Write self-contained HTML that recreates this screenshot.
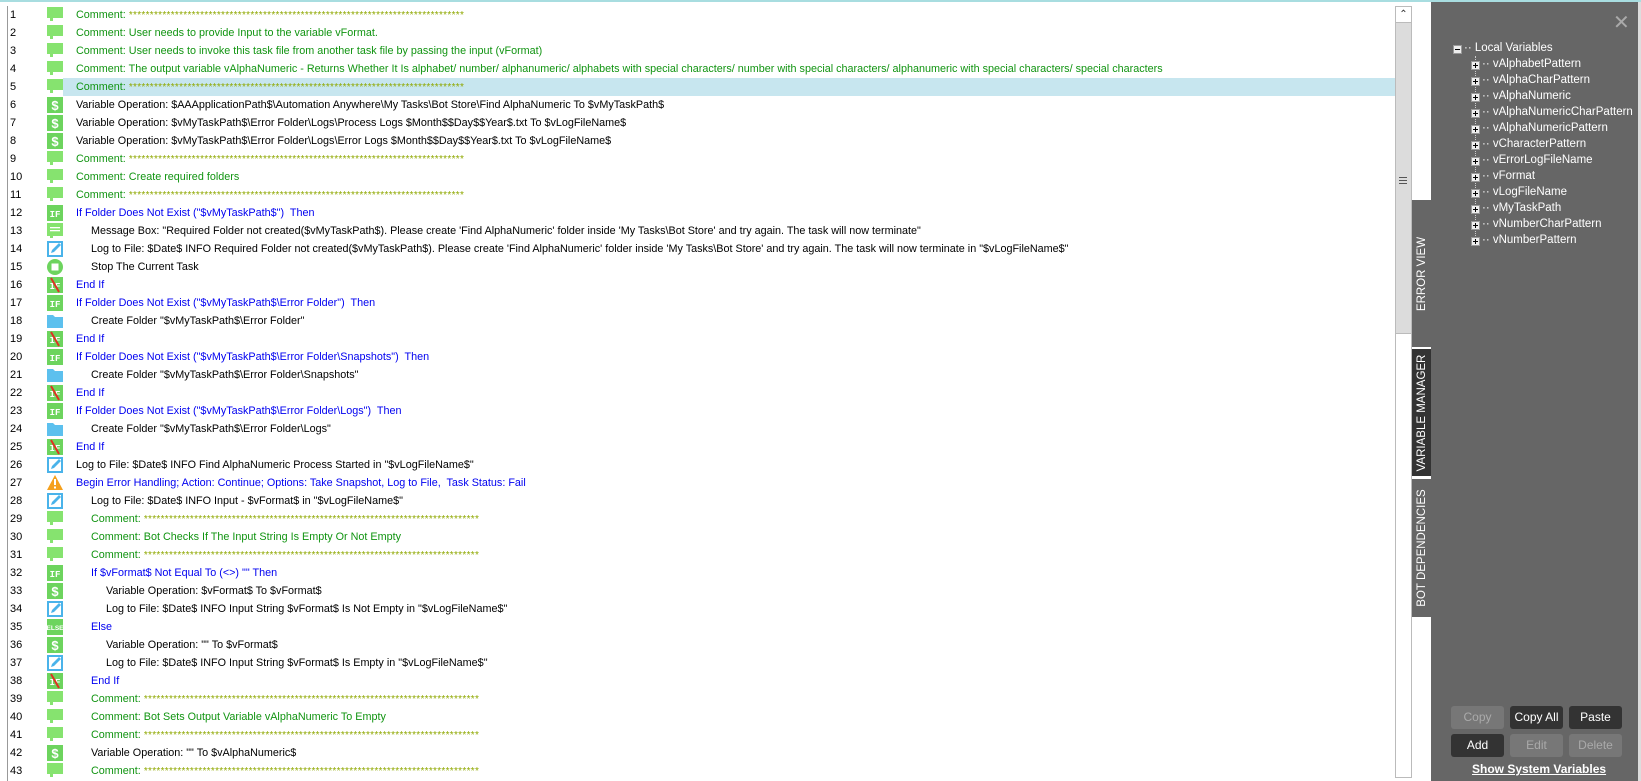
<!DOCTYPE html>
<html><head><meta charset="utf-8"><style>
*{margin:0;padding:0;box-sizing:border-box}
body{width:1641px;height:781px;overflow:hidden;background:#fff;font-family:"Liberation Sans",Arial,sans-serif;font-size:10.8px;position:relative}
.top{position:absolute;left:0;top:0;width:1641px;height:2px;background:#a8dde0}
.lb{position:absolute;left:7px;top:6px;width:1px;height:775px;background:#999}
.r{position:absolute;left:8px;height:18px;width:1387px;line-height:18px;white-space:nowrap}
.r.sel{background:#c7e6ef}
.n{position:absolute;left:2px;top:0;color:#000;font-size:11px}
.ic{position:absolute;left:39px;top:1px;width:16px;height:16px}
.t{position:absolute;left:68px;top:0}
.i1{left:83px}.i2{left:98px}
.g{color:#119411}.b{color:#0000f0}.k{color:#000}
.st{color:#8fa800;letter-spacing:0.3px;font-size:10px}
.sb{position:absolute;left:1395px;top:6px;width:17px;height:772px;border:1px solid #bbb;background:#fff}
.sb .up{position:absolute;left:0;top:0;width:15px;height:16px;border-bottom:1px solid #bbb;text-align:center;font-size:10px;line-height:16px;color:#333}
.sb .th{position:absolute;left:0;top:16px;width:15px;height:311px;background:#dcdcdc;border-bottom:1px solid #bbb}
.sb .th span{position:absolute;left:3px;top:154px;width:8px;height:7px;border-top:1px solid #555;border-bottom:1px solid #555}
.sb .th span:after{content:"";position:absolute;left:0;top:2px;width:8px;height:1px;background:#555}
.panel{position:absolute;left:1431px;top:2px;width:210px;height:779px;background:#666;border-right:3px solid #ddd}
.tab{position:absolute;left:1412px;width:19px;background:#666;color:#fff}
.tab span{position:absolute;left:50%;top:50%;transform:translate(-50%,-50%) rotate(-90deg);white-space:nowrap;font-size:11.5px}
.tv{position:absolute;color:#fff;font-size:11.5px;white-space:nowrap}
.bx{position:absolute;width:9px;height:9px;background:#eee;border:1px solid #999}
.bx:before{content:"";position:absolute;left:1px;top:3px;width:5px;height:1px;background:#000}
.bx.p:after{content:"";position:absolute;left:3px;top:1px;width:1px;height:5px;background:#000}
.btn{position:absolute;width:53px;height:23px;border-radius:3px;text-align:center;line-height:23px;font-size:12px}
.on{background:#333;color:#fff}.off{background:#777;color:#aaa}
</style></head><body>
<div class="top"></div>
<div class="lb"></div>

<svg width="0" height="0" style="position:absolute">
<defs>
<g id="cm"><rect x="0" y="0" width="16" height="11" fill="#86e36f"/><rect x="3" y="11" width="3" height="3" fill="#86e36f"/></g>
<g id="dl"><rect width="16" height="16" fill="#6dd45e"/><text x="8" y="13" text-anchor="middle" fill="#fff" font-size="13" font-family="Liberation Sans" font-weight="bold">$</text></g>
<g id="if"><rect width="16" height="16" fill="#6dd45e"/><text x="8" y="12" text-anchor="middle" fill="#fff" font-size="9" font-family="Liberation Mono" font-weight="bold">IF</text></g>
<g id="ei"><rect width="16" height="16" fill="#6dd45e"/><text x="8" y="12" text-anchor="middle" fill="#fff" font-size="9" font-family="Liberation Mono" font-weight="bold">IF</text><line x1="4" y1="1" x2="12" y2="15" stroke="#d32" stroke-width="2"/></g>
<g id="mb"><rect width="16" height="13" fill="#86e36f"/><rect x="3" y="4" width="10" height="1.3" fill="#fff"/><rect x="3" y="7" width="10" height="1.3" fill="#fff"/><rect x="3" y="13" width="3" height="2" fill="#86e36f"/></g>
<g id="lg"><rect x="1" y="1" width="14" height="14" fill="#fff" stroke="#4ab3ea" stroke-width="2"/><path d="M4 12 L5 9 L12 2 L14 4 L7 11 Z" fill="#4ab3ea"/></g>
<g id="sp"><circle cx="8" cy="8" r="8" fill="#6dd45e"/><rect x="4.5" y="4.5" width="7" height="7" fill="#fff"/></g>
<g id="fd"><path d="M0 2 H6 L8 4 H16 V15 H0 Z" fill="#5cc0ee"/></g>
<g id="wr"><path d="M8 0 L16 15 H0 Z" fill="#f5a01c"/><rect x="7" y="4" width="2" height="6" fill="#fff"/><rect x="7" y="11.5" width="2" height="2" fill="#fff"/></g>
<g id="el"><rect width="16" height="16" fill="#6dd45e"/><text x="8" y="11" text-anchor="middle" fill="#fff" font-size="6.5" font-family="Liberation Sans" font-weight="bold">ELSE</text></g>
</defs></svg>

<div class="r" style="top:6px"><span class="n">1</span><svg class="ic"><use href="#cm"/></svg><span class="t g">Comment: <span class="st">********************************************************************************</span></span></div>
<div class="r" style="top:24px"><span class="n">2</span><svg class="ic"><use href="#cm"/></svg><span class="t g">Comment: User needs to provide Input to the variable vFormat.</span></div>
<div class="r" style="top:42px"><span class="n">3</span><svg class="ic"><use href="#cm"/></svg><span class="t g">Comment: User needs to invoke this task file from another task file by passing the input (vFormat)</span></div>
<div class="r" style="top:60px"><span class="n">4</span><svg class="ic"><use href="#cm"/></svg><span class="t g">Comment: The output variable vAlphaNumeric - Returns Whether It Is alphabet/ number/ alphanumeric/ alphabets with special characters/ number with special characters/ alphanumeric with special characters/ special characters</span></div>
<div class="r sel" style="top:78px;left:63px;width:1332px"></div>
<div class="r" style="top:78px"><span class="n">5</span><svg class="ic"><use href="#cm"/></svg><span class="t g">Comment: <span class="st">********************************************************************************</span></span></div>
<div class="r" style="top:96px"><span class="n">6</span><svg class="ic"><use href="#dl"/></svg><span class="t k">Variable Operation: $AAApplicationPath$\Automation Anywhere\My Tasks\Bot Store\Find AlphaNumeric To $vMyTaskPath$</span></div>
<div class="r" style="top:114px"><span class="n">7</span><svg class="ic"><use href="#dl"/></svg><span class="t k">Variable Operation: $vMyTaskPath$\Error Folder\Logs\Process Logs $Month$$Day$$Year$.txt To $vLogFileName$</span></div>
<div class="r" style="top:132px"><span class="n">8</span><svg class="ic"><use href="#dl"/></svg><span class="t k">Variable Operation: $vMyTaskPath$\Error Folder\Logs\Error Logs $Month$$Day$$Year$.txt To $vLogFileName$</span></div>
<div class="r" style="top:150px"><span class="n">9</span><svg class="ic"><use href="#cm"/></svg><span class="t g">Comment: <span class="st">********************************************************************************</span></span></div>
<div class="r" style="top:168px"><span class="n">10</span><svg class="ic"><use href="#cm"/></svg><span class="t g">Comment: Create required folders</span></div>
<div class="r" style="top:186px"><span class="n">11</span><svg class="ic"><use href="#cm"/></svg><span class="t g">Comment: <span class="st">********************************************************************************</span></span></div>
<div class="r" style="top:204px"><span class="n">12</span><svg class="ic"><use href="#if"/></svg><span class="t b">If Folder Does Not Exist ("$vMyTaskPath$")&nbsp; Then</span></div>
<div class="r" style="top:222px"><span class="n">13</span><svg class="ic"><use href="#mb"/></svg><span class="t i1 k">Message Box: "Required Folder not created($vMyTaskPath$). Please create 'Find AlphaNumeric' folder inside 'My Tasks\Bot Store' and try again. The task will now terminate"</span></div>
<div class="r" style="top:240px"><span class="n">14</span><svg class="ic"><use href="#lg"/></svg><span class="t i1 k">Log to File: $Date$ INFO Required Folder not created($vMyTaskPath$). Please create 'Find AlphaNumeric' folder inside 'My Tasks\Bot Store' and try again. The task will now terminate in "$vLogFileName$"</span></div>
<div class="r" style="top:258px"><span class="n">15</span><svg class="ic"><use href="#sp"/></svg><span class="t i1 k">Stop The Current Task</span></div>
<div class="r" style="top:276px"><span class="n">16</span><svg class="ic"><use href="#ei"/></svg><span class="t b">End If</span></div>
<div class="r" style="top:294px"><span class="n">17</span><svg class="ic"><use href="#if"/></svg><span class="t b">If Folder Does Not Exist ("$vMyTaskPath$\Error Folder")&nbsp; Then</span></div>
<div class="r" style="top:312px"><span class="n">18</span><svg class="ic"><use href="#fd"/></svg><span class="t i1 k">Create Folder "$vMyTaskPath$\Error Folder"</span></div>
<div class="r" style="top:330px"><span class="n">19</span><svg class="ic"><use href="#ei"/></svg><span class="t b">End If</span></div>
<div class="r" style="top:348px"><span class="n">20</span><svg class="ic"><use href="#if"/></svg><span class="t b">If Folder Does Not Exist ("$vMyTaskPath$\Error Folder\Snapshots")&nbsp; Then</span></div>
<div class="r" style="top:366px"><span class="n">21</span><svg class="ic"><use href="#fd"/></svg><span class="t i1 k">Create Folder "$vMyTaskPath$\Error Folder\Snapshots"</span></div>
<div class="r" style="top:384px"><span class="n">22</span><svg class="ic"><use href="#ei"/></svg><span class="t b">End If</span></div>
<div class="r" style="top:402px"><span class="n">23</span><svg class="ic"><use href="#if"/></svg><span class="t b">If Folder Does Not Exist ("$vMyTaskPath$\Error Folder\Logs")&nbsp; Then</span></div>
<div class="r" style="top:420px"><span class="n">24</span><svg class="ic"><use href="#fd"/></svg><span class="t i1 k">Create Folder "$vMyTaskPath$\Error Folder\Logs"</span></div>
<div class="r" style="top:438px"><span class="n">25</span><svg class="ic"><use href="#ei"/></svg><span class="t b">End If</span></div>
<div class="r" style="top:456px"><span class="n">26</span><svg class="ic"><use href="#lg"/></svg><span class="t k">Log to File: $Date$ INFO Find AlphaNumeric Process Started in "$vLogFileName$"</span></div>
<div class="r" style="top:474px"><span class="n">27</span><svg class="ic"><use href="#wr"/></svg><span class="t b">Begin Error Handling; Action: Continue; Options: Take Snapshot, Log to File,&nbsp; Task Status: Fail</span></div>
<div class="r" style="top:492px"><span class="n">28</span><svg class="ic"><use href="#lg"/></svg><span class="t i1 k">Log to File: $Date$ INFO Input - $vFormat$ in "$vLogFileName$"</span></div>
<div class="r" style="top:510px"><span class="n">29</span><svg class="ic"><use href="#cm"/></svg><span class="t i1 g">Comment: <span class="st">********************************************************************************</span></span></div>
<div class="r" style="top:528px"><span class="n">30</span><svg class="ic"><use href="#cm"/></svg><span class="t i1 g">Comment: Bot Checks If The Input String Is Empty Or Not Empty</span></div>
<div class="r" style="top:546px"><span class="n">31</span><svg class="ic"><use href="#cm"/></svg><span class="t i1 g">Comment: <span class="st">********************************************************************************</span></span></div>
<div class="r" style="top:564px"><span class="n">32</span><svg class="ic"><use href="#if"/></svg><span class="t i1 b">If $vFormat$ Not Equal To (&lt;&gt;) "" Then</span></div>
<div class="r" style="top:582px"><span class="n">33</span><svg class="ic"><use href="#dl"/></svg><span class="t i2 k">Variable Operation: $vFormat$ To $vFormat$</span></div>
<div class="r" style="top:600px"><span class="n">34</span><svg class="ic"><use href="#lg"/></svg><span class="t i2 k">Log to File: $Date$ INFO Input String $vFormat$ Is Not Empty in "$vLogFileName$"</span></div>
<div class="r" style="top:618px"><span class="n">35</span><svg class="ic"><use href="#el"/></svg><span class="t i1 b">Else</span></div>
<div class="r" style="top:636px"><span class="n">36</span><svg class="ic"><use href="#dl"/></svg><span class="t i2 k">Variable Operation: "" To $vFormat$</span></div>
<div class="r" style="top:654px"><span class="n">37</span><svg class="ic"><use href="#lg"/></svg><span class="t i2 k">Log to File: $Date$ INFO Input String $vFormat$ Is Empty in "$vLogFileName$"</span></div>
<div class="r" style="top:672px"><span class="n">38</span><svg class="ic"><use href="#ei"/></svg><span class="t i1 b">End If</span></div>
<div class="r" style="top:690px"><span class="n">39</span><svg class="ic"><use href="#cm"/></svg><span class="t i1 g">Comment: <span class="st">********************************************************************************</span></span></div>
<div class="r" style="top:708px"><span class="n">40</span><svg class="ic"><use href="#cm"/></svg><span class="t i1 g">Comment: Bot Sets Output Variable vAlphaNumeric To Empty</span></div>
<div class="r" style="top:726px"><span class="n">41</span><svg class="ic"><use href="#cm"/></svg><span class="t i1 g">Comment: <span class="st">********************************************************************************</span></span></div>
<div class="r" style="top:744px"><span class="n">42</span><svg class="ic"><use href="#dl"/></svg><span class="t i1 k">Variable Operation: "" To $vAlphaNumeric$</span></div>
<div class="r" style="top:762px"><span class="n">43</span><svg class="ic"><use href="#cm"/></svg><span class="t i1 g">Comment: <span class="st">********************************************************************************</span></span></div>

<div class="sb"><div class="up">&#8963;</div><div class="th"><span></span></div></div>

<div class="tab" style="top:200px;height:147px"><span>ERROR VIEW</span></div>
<div class="tab" style="top:348px;height:129px;background:#333;border-top:1px solid #fff;border-bottom:1px solid #fff"><span>VARIABLE MANAGER</span></div>
<div class="tab" style="top:479px;height:138px"><span>BOT DEPENDENCIES</span></div>

<div class="panel">
<div style="position:absolute;left:182px;top:8px;color:#aaa;font-size:20px">&#x2715;</div>
</div>
<div style="position:absolute;left:1475px;top:56px;height:180px;border-left:1px dotted #ccc"></div>
<div class="bx" style="left:1453px;top:45px"></div><div class="tv" style="left:1464px;top:42px">·· Local Variables</div>
<div class="bx p" style="left:1471px;top:61px"></div><div class="tv" style="left:1482px;top:58px">·· vAlphabetPattern</div>
<div class="bx p" style="left:1471px;top:77px"></div><div class="tv" style="left:1482px;top:74px">·· vAlphaCharPattern</div>
<div class="bx p" style="left:1471px;top:93px"></div><div class="tv" style="left:1482px;top:90px">·· vAlphaNumeric</div>
<div class="bx p" style="left:1471px;top:109px"></div><div class="tv" style="left:1482px;top:106px">·· vAlphaNumericCharPattern</div>
<div class="bx p" style="left:1471px;top:125px"></div><div class="tv" style="left:1482px;top:122px">·· vAlphaNumericPattern</div>
<div class="bx p" style="left:1471px;top:141px"></div><div class="tv" style="left:1482px;top:138px">·· vCharacterPattern</div>
<div class="bx p" style="left:1471px;top:157px"></div><div class="tv" style="left:1482px;top:154px">·· vErrorLogFileName</div>
<div class="bx p" style="left:1471px;top:173px"></div><div class="tv" style="left:1482px;top:170px">·· vFormat</div>
<div class="bx p" style="left:1471px;top:189px"></div><div class="tv" style="left:1482px;top:186px">·· vLogFileName</div>
<div class="bx p" style="left:1471px;top:205px"></div><div class="tv" style="left:1482px;top:202px">·· vMyTaskPath</div>
<div class="bx p" style="left:1471px;top:221px"></div><div class="tv" style="left:1482px;top:218px">·· vNumberCharPattern</div>
<div class="bx p" style="left:1471px;top:237px"></div><div class="tv" style="left:1482px;top:234px">·· vNumberPattern</div>

<div class="btn off" style="left:1451px;top:706px">Copy</div>
<div class="btn on" style="left:1510px;top:706px">Copy All</div>
<div class="btn on" style="left:1569px;top:706px">Paste</div>
<div class="btn on" style="left:1451px;top:734px">Add</div>
<div class="btn off" style="left:1510px;top:734px">Edit</div>
<div class="btn off" style="left:1569px;top:734px">Delete</div>
<div class="tv" style="left:1472px;top:762px;font-weight:bold;text-decoration:underline;font-size:12px">Show System Variables</div>
</body></html>
